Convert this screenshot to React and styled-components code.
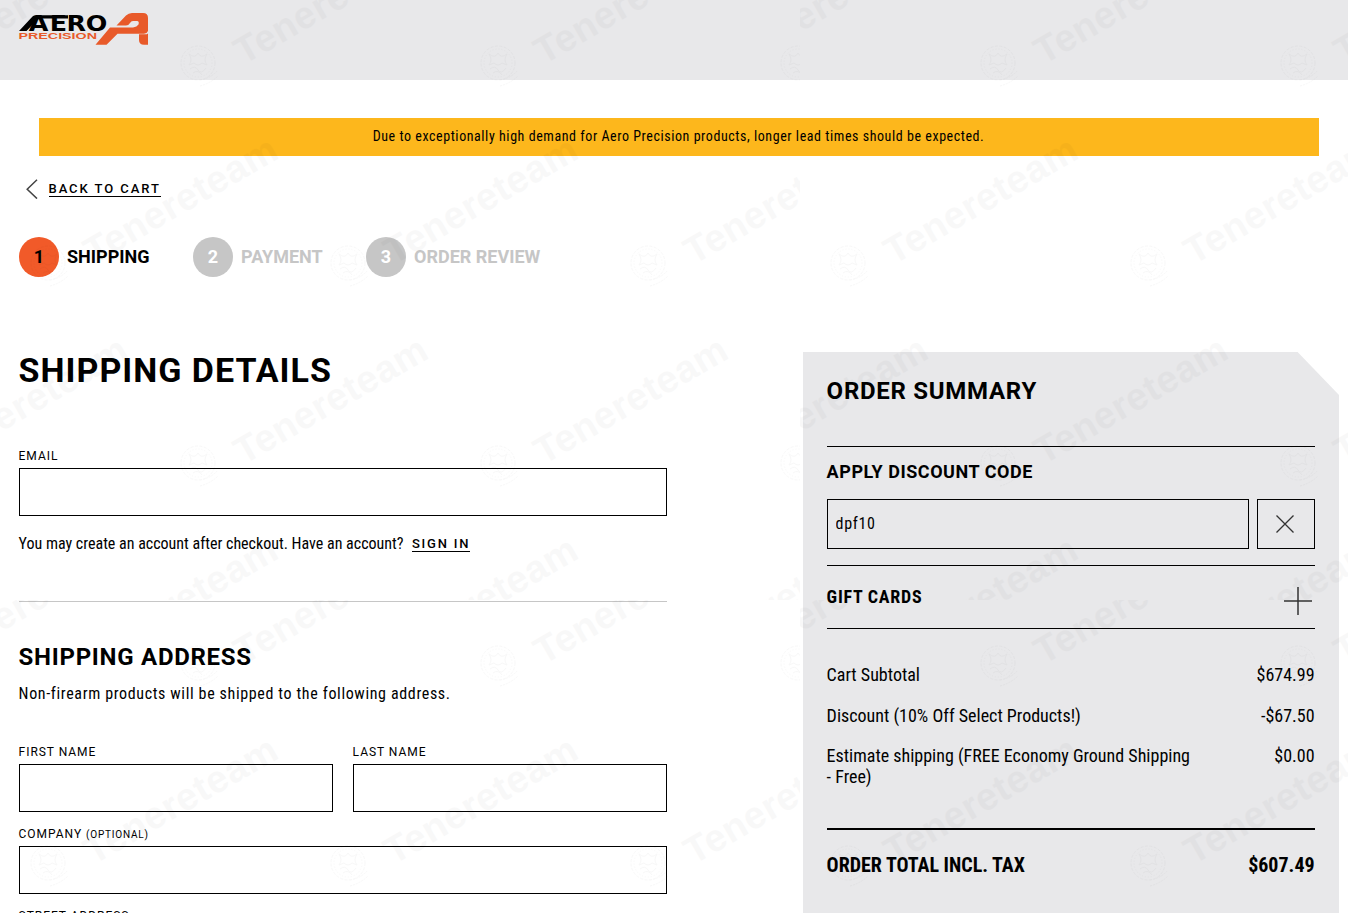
import React from "react";
import styled, { createGlobalStyle } from "styled-components";

const steps = [
  { id: 1, name: "Shipping", active: true, width: 174 },
  { id: 2, name: "Payment", active: false, width: 173 },
  { id: 3, name: "Order Review", active: false, width: 180 },
];

const totals = [
  { label: "Cart Subtotal", value: "$674.99" },
  { label: "Discount (10% Off Select Products!)", value: "-$67.50" },
  {
    label: "Estimate shipping (FREE Economy Ground Shipping - Free)",
    value: "$0.00",
  },
];

// stamps inside one 800x600 watermark tile
const stamps = [
  [-102, 63],
  [198, 63],
  [498, 63],
  [798, 63],
  [48, 263],
  [348, 263],
  [648, 263],
  [-102, 463],
  [198, 463],
  [498, 463],
  [798, 463],
  [48, 663],
  [348, 663],
  [648, 663],
];
const tiles = [
  { id: "a", stamps },
  { id: "b", stamps: stamps.filter(([x]) => x < 600) },
  { id: "c", stamps: stamps.filter(([, y]) => y < 400) },
  { id: "d", stamps: stamps.filter(([x, y]) => x < 600 && y < 400) },
];

const Logo = () => (
  <LogoLink href="#" aria-label="Aero Precision">
    <svg width="131" height="34" viewBox="18 12 131 34">
      <path d="M19 31 L32.5 16.6 Q33.8 15.2 36 15.2 H68 V18.4 H38.5 L26.5 31 Z" fill="#000" />
      <text
        x="23.6 40.8 54.6 70.2"
        y="30.6"
        transform="scale(1.22 1)"
        fontFamily="DejaVu Sans"
        fontWeight="700"
        fontSize="20.8"
      >
        AERO
      </text>
      <text
        x="18.5"
        y="38.6"
        fill="#e85a2a"
        fontFamily="Liberation Sans"
        fontWeight="700"
        fontSize="8.2"
        textLength="78.5"
        lengthAdjust="spacingAndGlyphs"
      >
        PRECISION
      </text>
      <path
        d="M95.5 44.7 L110 27.4 H133 Q137 27 138.5 24.5 Q139.5 21 137 21 H133 Q131 21 130 23 Q128.5 25.6 126 25.6 H116.5 L126 15.5 Q128.5 13 132 13 H143 Q148 13 148 18 V31 Q147 33.7 144 33.7 H117.5 L106.5 44.7 Z"
        fill="#e85a2a"
      />
      <path
        d="M139 34.3 H145 Q147 34.3 148 33.4 V44.7 H144 Q139 44.7 139 40 Z"
        fill="#e85a2a"
      />
    </svg>
  </LogoLink>
);

const Stamp = ({ x, y }) => (
  <StampBox $x={x} $y={y}>
    <svg width="50" height="56" viewBox="-20 -20 50 56" fill="none">
      <g stroke="#000" strokeWidth="1">
        <circle r="17" strokeDasharray="3 1.5" />
        <circle r="14" strokeDasharray="1 2" />
        <path d="M-9 -9 Q-3 -4 0 -10 Q3 -4 9 -9 Q5 -3 9 2 L4 0 Q0 4 -4 0 L-9 2 Q-5 -3 -9 -9" />
        <path d="M-8 6 Q-3 2 0 7 Q3 12 8 5 M-5 10 Q0 6 4 12" />
        <path d="M2 17 Q13 15 19 8 M2 23 Q13 20 20 13" strokeDasharray="2 1" />
      </g>
    </svg>
    <StampName>Tenereteam</StampName>
  </StampBox>
);

const Watermark = () => (
  <WatermarkLayer aria-hidden="true">
    {tiles.map((tile) => (
      <Tile key={tile.id}>
        {tile.stamps.map(([x, y]) => (
          <Stamp key={`${x}-${y}`} x={x} y={y} />
        ))}
      </Tile>
    ))}
  </WatermarkLayer>
);

const App = () => {
  return (
    <Page>
      <GlobalStyle />
      <Header>
        <Logo />
      </Header>
      <Notice>
        Due to exceptionally high demand for Aero Precision products, longer
        lead times should be expected.
      </Notice>
      <BackRow>
        <svg width="12" height="20" viewBox="0 0 12 20" fill="none">
          <path d="M11 0.8 L1.2 10.3 L11 19.6" stroke="#444" strokeWidth="1.5" />
        </svg>
        <TextLink href="#">Back to cart</TextLink>
      </BackRow>
      <Steps>
        {steps.map((step) => (
          <Step key={step.id} $active={step.active} $width={step.width}>
            <StepNumber $active={step.active}>{step.id}</StepNumber>
            <StepName>{step.name}</StepName>
          </Step>
        ))}
      </Steps>
      <Main>
        <Details>
          <Title>Shipping details</Title>
          <EmailField>
            Email
            <Input type="email" />
          </EmailField>
          <AccountNote>
            You may create an account after checkout. Have an account?
            <SignInLink href="#">Sign in</SignInLink>
          </AccountNote>
          <Divider />
          <SubTitle>Shipping address</SubTitle>
          <Hint>Non-firearm products will be shipped to the following address.</Hint>
          <FieldGrid>
            <Field>
              First name
              <Input />
            </Field>
            <Field>
              Last name
              <Input />
            </Field>
            <WideField>
              <LabelText>
                Company <Optional>(optional)</Optional>
              </LabelText>
              <Input />
            </WideField>
            <WideField>
              Street address
              <Input />
            </WideField>
          </FieldGrid>
        </Details>
        <Summary>
          <SummaryTitle>Order summary</SummaryTitle>
          <Discount>
            <SectionTitle>Apply discount code</SectionTitle>
            <CodeRow>
              <CodeInput defaultValue="dpf10" />
              <ClearButton aria-label="Remove code">
                <svg width="18" height="18" viewBox="0 0 18 18">
                  <path d="M0.5 0.5 L17.5 17.5 M17.5 0.5 L0.5 17.5" stroke="#333" strokeWidth="1.3" />
                </svg>
              </ClearButton>
            </CodeRow>
          </Discount>
          <GiftCards>
            <GiftTitle>Gift cards</GiftTitle>
            <svg width="28" height="28" viewBox="0 0 28 28">
              <path d="M14 0 V28 M0 14 H28" stroke="#333" strokeWidth="1.5" />
            </svg>
          </GiftCards>
          <Totals>
            {totals.map((row) => (
              <TotalRow key={row.label}>
                <TotalLabel>{row.label}</TotalLabel>
                <span>{row.value}</span>
              </TotalRow>
            ))}
          </Totals>
          <GrandTotal>
            <span>Order total incl. tax</span>
            <span>$607.49</span>
          </GrandTotal>
        </Summary>
      </Main>
      <Watermark />
    </Page>
  );
};
export default App;

const GlobalStyle = createGlobalStyle`
  * {
    box-sizing: border-box;
  }
  body {
    margin: 0;
    background: #fff;
    color: #000;
    font-family: Roboto, sans-serif;
  }
`;
const Page = styled.div`
  position: relative;
  height: 913px;
  overflow: hidden;
`;
const Header = styled.header`
  height: 80px;
  padding: 12px 18px;
  background: #e8e8ea;
`;
const LogoLink = styled.a`
  display: block;
  width: 131px;
  height: 34px;
`;
const Notice = styled.div`
  height: 38px;
  margin: 38px 29px 0 39px;
  padding-right: 1px;
  background: #fdb71c;
  font-family: "Roboto Condensed", sans-serif;
  font-size: 14px;
  line-height: 37px;
  letter-spacing: 0.56px;
  text-align: center;
`;
const BackRow = styled.div`
  display: flex;
  align-items: center;
  gap: 11px;
  height: 22px;
  margin: 22px 0 0 25.5px;
`;
const TextLink = styled.a`
  margin-top: -1px;
  border-bottom: 1px solid #000;
  color: #000;
  font-family: Roboto, sans-serif;
  font-size: 13px;
  font-weight: 500;
  line-height: 15px;
  letter-spacing: 1.93px;
  text-decoration: none;
  text-transform: uppercase;
`;
const SignInLink = styled(TextLink)`
  margin-top: 1px;
  letter-spacing: 1.8px;
`;
const Steps = styled.div`
  display: flex;
  margin: 37px 0 0 19px;
`;
const Step = styled.div`
  display: flex;
  gap: 8px;
  width: ${(props) => props.$width}px;
  color: ${(props) => (props.$active ? "#000" : "#c6c6c6")};
  font-size: 18px;
  font-weight: 700;
  line-height: 40px;
  text-transform: uppercase;
  white-space: nowrap;
`;
const StepNumber = styled.span`
  width: 40px;
  height: 40px;
  border-radius: 50%;
  background: ${(props) => (props.$active ? "#f15a29" : "#c6c6c6")};
  color: ${(props) => (props.$active ? "#000" : "#fff")};
  text-align: center;
`;
const StepName = styled.span`
  line-height: 39px;
`;
const Main = styled.main`
  display: flex;
  justify-content: space-between;
  margin: 75px 9.4px 0 18.6px;
`;
const Details = styled.section`
  width: 648px;
`;
const Title = styled.h1`
  margin: 0;
  font-size: 34px;
  font-weight: 700;
  line-height: 36px;
  letter-spacing: 1px;
  text-transform: uppercase;
`;
const Field = styled.label`
  display: flex;
  flex-direction: column;
  gap: 4px;
  font-size: 12px;
  line-height: 16px;
  letter-spacing: 0.96px;
  text-transform: uppercase;
`;
const EmailField = styled(Field)`
  margin-top: 60px;
`;
const WideField = styled(Field)`
  grid-column: span 2;
`;
const Input = styled.input`
  width: 100%;
  height: 48px;
  padding: 0 8px;
  border: 1px solid #000;
  border-radius: 0;
  background: transparent;
`;
const AccountNote = styled.div`
  display: flex;
  align-items: center;
  gap: 8.4px;
  height: 20px;
  margin-top: 17px;
  font-family: "Roboto Condensed", sans-serif;
  font-size: 16px;
`;
const Divider = styled.div`
  margin-top: 48px;
  border-top: 1px solid #c6c6c6;
`;
const SubTitle = styled.h2`
  margin: 41px 0 0;
  font-size: 24px;
  font-weight: 700;
  line-height: 28px;
  letter-spacing: 0.72px;
  text-transform: uppercase;
`;
const Hint = styled.p`
  margin: 13px 0 0;
  font-family: "Roboto Condensed", sans-serif;
  font-size: 16px;
  line-height: 20px;
  letter-spacing: 0.64px;
`;
const FieldGrid = styled.div`
  display: grid;
  grid-template-columns: 1fr 1fr;
  gap: 14px 20px;
  margin-top: 40px;
`;
const LabelText = styled.span`
  height: 16px;
`;
const Optional = styled.small`
  font-size: 10px;
  letter-spacing: 0.8px;
`;
const Summary = styled.aside`
  width: 536px;
  height: 580px;
  padding: 24px;
  background: #e8e8ea;
  clip-path: polygon(0 0, 495px 0, 536.4px 43px, 536.4px 100%, 0 100%);
`;
const SummaryTitle = styled.h2`
  margin: 0 0 40px;
  font-size: 24px;
  font-weight: 700;
  line-height: 30px;
  letter-spacing: 0.72px;
  text-transform: uppercase;
`;
const Discount = styled.div`
  padding: 13px 0 16px;
  border-top: 1px solid #000;
  border-bottom: 1px solid #000;
`;
const SectionTitle = styled.h3`
  margin: 0;
  font-size: 18px;
  font-weight: 700;
  line-height: 24px;
  letter-spacing: 0.54px;
  text-transform: uppercase;
`;
const CodeRow = styled.div`
  display: flex;
  gap: 8px;
  margin-top: 15px;
`;
const CodeInput = styled(Input)`
  flex: 1;
  height: 50px;
  padding-bottom: 2px;
  font-family: "Roboto Condensed", sans-serif;
  font-size: 16px;
  letter-spacing: 0.64px;
`;
const ClearButton = styled.button`
  display: flex;
  align-items: center;
  justify-content: center;
  width: 58px;
  padding: 0 2px 0 0;
  border: 1px solid #000;
  background: transparent;
`;
const GiftCards = styled.div`
  display: flex;
  justify-content: space-between;
  height: 63px;
  padding: 21px 3px 0 0;
  border-bottom: 1px solid #000;
`;
const GiftTitle = styled.h3`
  margin: 0;
  font-family: "Roboto Condensed", sans-serif;
  font-size: 18px;
  font-weight: 700;
  line-height: 20px;
  letter-spacing: 0.74px;
  text-transform: uppercase;
`;
const Totals = styled.div`
  display: grid;
  gap: 19.5px;
  height: 199px;
  padding-top: 35px;
  align-content: start;
  font-family: "Roboto Condensed", sans-serif;
  font-size: 18px;
  line-height: 21px;
`;
const TotalRow = styled.div`
  display: flex;
  justify-content: space-between;
`;
const TotalLabel = styled.span`
  width: 366px;
`;
const GrandTotal = styled.div`
  display: flex;
  justify-content: space-between;
  padding-top: 24px;
  border-top: 2px solid #000;
  font-family: "Roboto Condensed", sans-serif;
  font-size: 20px;
  font-weight: 700;
  line-height: 23px;
  text-transform: uppercase;
`;
const WatermarkLayer = styled.div`
  position: absolute;
  top: 0;
  left: 0;
  display: grid;
  grid-template-columns: 800px 800px;
  grid-template-rows: 600px 600px;
  opacity: 0.024;
  pointer-events: none;
`;
const Tile = styled.div`
  position: relative;
  overflow: hidden;
`;
const StampBox = styled.div`
  position: absolute;
  top: ${(props) => props.$y - 20}px;
  left: ${(props) => props.$x - 20}px;
`;
const StampName = styled.span`
  position: absolute;
  top: -9px;
  left: 59px;
  font-family: "Liberation Sans", sans-serif;
  font-size: 38px;
  font-weight: 700;
  line-height: 40px;
  letter-spacing: 0.6px;
  transform: rotate(-30deg);
  transform-origin: 0 50%;
`;
